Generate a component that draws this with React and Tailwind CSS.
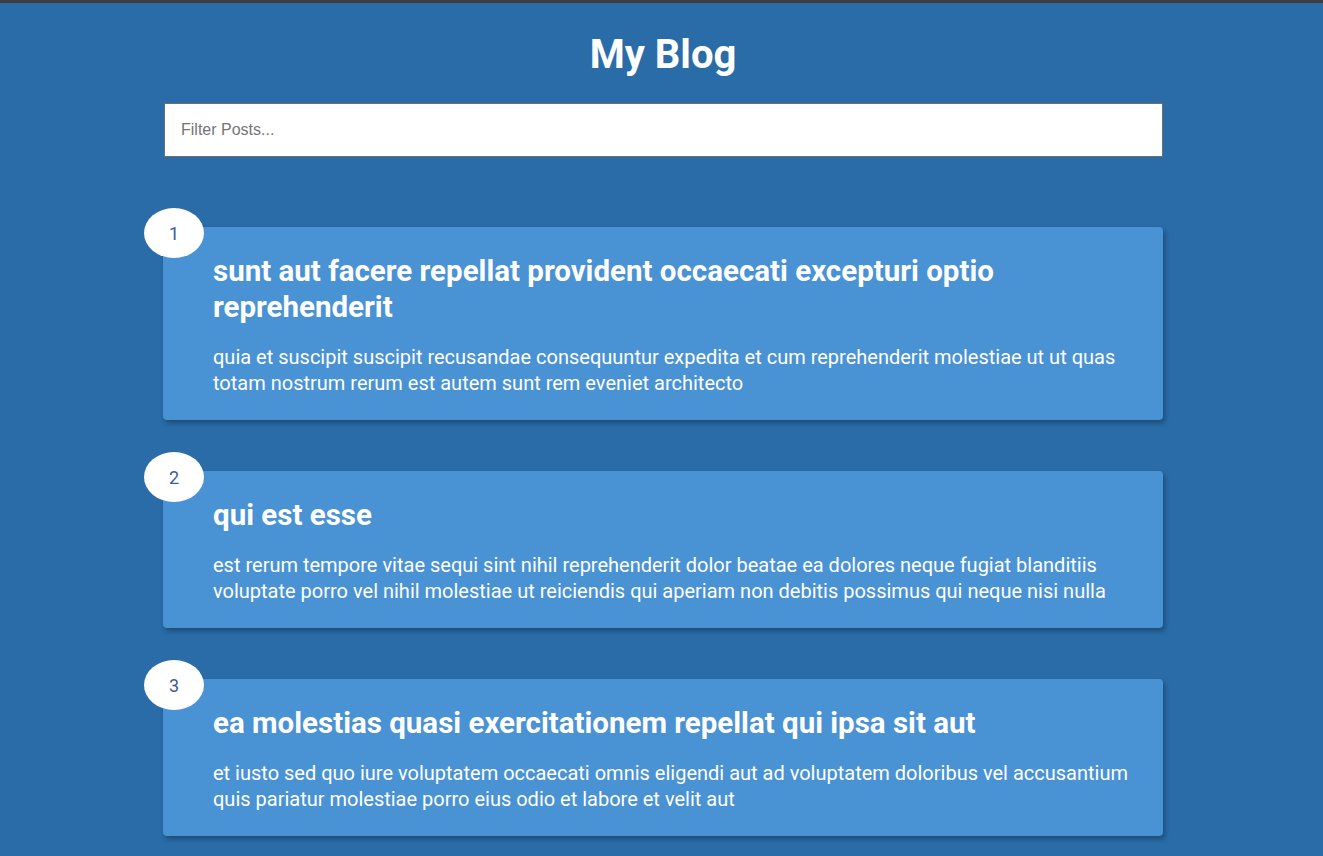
import React, { useState } from 'react'

const posts = [
  {
    id: 1,
    title: 'sunt aut facere repellat provident occaecati excepturi optio reprehenderit',
    body: 'quia et suscipit suscipit recusandae consequuntur expedita et cum reprehenderit molestiae ut ut quas totam nostrum rerum est autem sunt rem eveniet architecto',
  },
  {
    id: 2,
    title: 'qui est esse',
    body: 'est rerum tempore vitae sequi sint nihil reprehenderit dolor beatae ea dolores neque fugiat blanditiis voluptate porro vel nihil molestiae ut reiciendis qui aperiam non debitis possimus qui neque nisi nulla',
  },
  {
    id: 3,
    title: 'ea molestias quasi exercitationem repellat qui ipsa sit aut',
    body: 'et iusto sed quo iure voluptatem occaecati omnis eligendi aut ad voluptatem doloribus vel accusantium quis pariatur molestiae porro eius odio et labore et velit aut',
  },
]

function Post({ post }) {
  return (
    <div className="relative rounded bg-[#4992d3] pt-[26px] pb-[24px] pl-[50px] pr-[30px] text-white shadow-[2px_3px_5px_rgba(0,0,0,0.3)]">
      <div className="absolute -left-[19px] -top-[19px] flex h-[50px] w-[60px] items-center justify-center rounded-[50%] bg-white text-[18px] text-[#3b5b98]">
        {post.id}
      </div>
      <h2 className="text-[29.5px] font-bold leading-[36px]">{post.title}</h2>
      <p className="mt-[19px] text-[20px] leading-[26px]">{post.body}</p>
    </div>
  )
}

export default function App() {
  const [filter, setFilter] = useState('')
  const shown = posts.filter(function(p) {
    return p.title.includes(filter) || p.body.includes(filter)
  })

  return (
    <div className="min-h-[856px] border-t-[3px] border-[#3d3d3f] bg-[#296ca8] pb-[20px] font-['Roboto',sans-serif]">
      <div className="ml-[163px] w-[1000px]">
        <h1 className="pt-[28px] text-center text-[40px] font-bold leading-[48px] text-white">My Blog</h1>
        <input
          type="text"
          value={filter}
          onChange={function(e) { setFilter(e.target.value) }}
          placeholder="Filter Posts..."
          className="mt-[24px] ml-px block h-[54px] w-[999px] border border-[#6f6f6f] bg-white px-4 font-['Liberation_Sans',sans-serif] text-[16px] text-[#333] outline-none placeholder:text-[#757575]"
        />
        <div className="mt-[70px] flex flex-col gap-[51px]">
          {shown.map(function(p) { return <Post key={p.id} post={p} /> })}
        </div>
      </div>
    </div>
  )
}
